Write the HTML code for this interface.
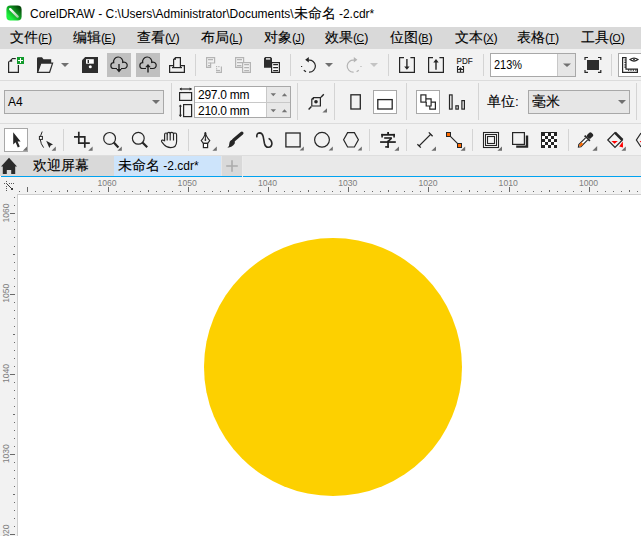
<!DOCTYPE html>
<html><head><meta charset="utf-8">
<style>
*{margin:0;padding:0;box-sizing:border-box}
html,body{width:641px;height:536px;overflow:hidden;background:#fff;font-family:"Liberation Sans",sans-serif;color:#000}
.a{position:absolute}
svg{position:absolute;overflow:visible}
#title{left:0;top:0;width:641px;height:27px;background:#fff}
#menu{left:0;top:27px;width:641px;height:22px;background:#d9d9d9}
#tb1{left:0;top:49px;width:641px;height:32px;background:#f2f2f2;border-bottom:1px solid #dcdcdc}
#tb2{left:0;top:81px;width:641px;height:43px;background:#f2f2f2;border-bottom:1px solid #dcdcdc}
#tb3{left:0;top:124px;width:641px;height:31px;background:#f2f2f2}
#tabs{left:0;top:155px;width:641px;height:21px;background:#e9e9e9}
#blue{left:1px;top:176px;width:640px;height:1px;background:#00a2f0}
#hr{left:0;top:177px;width:641px;height:18px;background:#f2f2f2}
#hline{left:17px;top:194px;width:624px;height:1px;background:#cfcfcf}
#vr{left:0;top:195px;width:17px;height:341px;background:#f2f2f2}
#vline{left:17px;top:194px;width:1px;height:342px;background:#cfcfcf}
#canvas{left:18px;top:195px;width:623px;height:341px;background:#fff}
.mi{position:absolute;top:29px;font-size:13.5px;line-height:18px;white-space:nowrap}
.mi .p{font-size:12.5px;letter-spacing:-0.6px}
.mi .p u{font-size:10.5px;letter-spacing:0}
.cj{font-size:13.5px}
.k{-webkit-text-stroke:0.12px #000}
.sep{position:absolute;width:1px;background:#d0d0d0}
</style></head><body>
<div id="title" class="a"></div>
<div id="menu" class="a"></div>
<div id="tb1" class="a"></div>
<div id="tb2" class="a"></div>
<div id="tb3" class="a"></div>
<div id="tabs" class="a"></div>
<div id="hr" class="a"></div>
<div id="blue" class="a"></div>
<div id="vr" class="a"></div>
<div id="hline" class="a"></div>
<div id="vline" class="a"></div>
<div id="canvas" class="a"></div>

<!-- title -->
<svg style="left:6px;top:5px" width="16" height="16" viewBox="0 0 16 16">
<defs><linearGradient id="lg" x1="0" y1="1" x2="1" y2="0"><stop offset="0.22" stop-color="#1ef23e"/><stop offset="0.5" stop-color="#0fa824"/><stop offset="0.85" stop-color="#064a0b"/></linearGradient>
<linearGradient id="lw" x1="0" y1="0" x2="1" y2="1"><stop offset="0" stop-color="#ffffff"/><stop offset="1" stop-color="#a8cfa8"/></linearGradient></defs>
<rect x="0.4" y="0.4" width="15.2" height="15.2" rx="4" fill="url(#lg)"/>
<path d="M4.2 4.2 L11.6 11.6" stroke="url(#lw)" stroke-width="2.4" stroke-linecap="round"/>
</svg>
<div class="a" style="left:30px;top:5px;font-size:12px;line-height:18px;white-space:nowrap">CorelDRAW - C:\Users\Administrator\Documents\<span class="cj k">未命名</span> -2.cdr*</div>

<!-- menu -->
<div class="mi" style="left:10px"><span class="k">文件</span><span class="p">(<u>F</u>)</span></div>
<div class="mi" style="left:73px"><span class="k">编辑</span><span class="p">(<u>E</u>)</span></div>
<div class="mi" style="left:137px"><span class="k">查看</span><span class="p">(<u>V</u>)</span></div>
<div class="mi" style="left:201px"><span class="k">布局</span><span class="p">(<u>L</u>)</span></div>
<div class="mi" style="left:264px"><span class="k">对象</span><span class="p">(<u>J</u>)</span></div>
<div class="mi" style="left:325px"><span class="k">效果</span><span class="p">(<u>C</u>)</span></div>
<div class="mi" style="left:390px"><span class="k">位图</span><span class="p">(<u>B</u>)</span></div>
<div class="mi" style="left:455px"><span class="k">文本</span><span class="p">(<u>X</u>)</span></div>
<div class="mi" style="left:517px"><span class="k">表格</span><span class="p">(<u>T</u>)</span></div>
<div class="mi" style="left:581px"><span class="k">工具</span><span class="p">(<u>O</u>)</span></div>


<!-- toolbar1 icons -->
<svg style="left:0;top:0" width="641" height="160">
<g fill="none" stroke="#262626" stroke-width="1.2">
 <!-- new doc -->
 <path d="M8.6 61.5 V72.4 H18.4 V65"/>
 <path d="M12 58.6 H15.8"/>
</g>
<path d="M8.4 61.8 L12.2 58 L12.2 61.8 Z" fill="#262626"/>
<rect x="17" y="57" width="7" height="7" fill="#129a2c"/>
<rect x="20" y="58" width="1" height="5" fill="#fff"/><rect x="18" y="60" width="5" height="1" fill="#fff"/>
<!-- folder -->
<path d="M37 72.7 V58.5 Q37 57.2 38.3 57.2 H42 L43.5 59.2 H51.2 V63 H40.8 L37.6 72.7 Z" fill="#2d2d2d"/>
<path d="M40.8 63.2 H52.6 L49.6 72.3 H37.6 Z" fill="none" stroke="#2d2d2d" stroke-width="1.2"/>
<path d="M61 63 H69 L65 67 Z" fill="#707070"/>
<!-- save -->
<path d="M82 60.2 L85.2 57 H98 V73 H82 Z" fill="#2d2d2d"/>
<rect x="86" y="59.2" width="7.8" height="4.5" fill="#fff"/>
<rect x="87.6" y="60" width="1.4" height="3" fill="#2d2d2d"/>
<circle cx="90.3" cy="66.8" r="1.5" fill="#fff"/>
<!-- cloud buttons -->
<rect x="107" y="53" width="24" height="24" fill="#c0c0c0"/>
<rect x="136" y="53" width="24" height="24" fill="#c0c0c0"/>
<g fill="none" stroke="#1e1e1e" stroke-width="1.2">
 <path d="M117 68.5 H113.80 A2.9 2.9 0 0 1 113.73 62.7 A4.6 4.6 0 1 1 122.74 62.36 A3.2 3.2 0 1 1 124 68.5 H121"/>
 <path d="M146 68.5 H142.80 A2.9 2.9 0 0 1 142.73 62.7 A4.6 4.6 0 1 1 151.74 62.36 A3.2 3.2 0 1 1 153 68.5 H150"/>
</g>
<path d="M118.3 64 H119.7 V69 H121.8 L119 72.6 L116.2 69 H118.3 Z" fill="#1e1e1e"/>
<path d="M147.3 72.6 H148.7 V67.3 H150.8 L148 63.9 L145.2 67.3 H147.3 Z" fill="#1e1e1e"/>
<!-- print -->
<g fill="none" stroke="#262626" stroke-width="1.2">
 <path d="M173.6 67.3 V59.4 L175.6 57.6 H180.4 V67.3"/>
 <path d="M173.6 65.6 H169.6 V72.4 H184.4 V65.6 H180.4"/>
 <path d="M172 67.6 H182"/>
</g>
<path d="M173.4 59.8 L176 57.4 L176 59.8 Z" fill="#262626"/>
<rect x="195" y="54" width="1" height="22" fill="#d4d4d4"/>
<!-- cut disabled -->
<g fill="none" stroke="#b4b4b4" stroke-width="1.2">
 <path d="M206.6 67.4 V57.6 H214.6 V63 H210.6 V67.4 Z"/>
 <path d="M208 59.6 H213 M208 63 H210.6 M208 65.6 H210"/>
 <path d="M221.4 66.5 V72.3 H216" />
 <path d="M216 70.5 H220"/>
</g>
<g fill="#b4b4b4"><rect x="216" y="66" width="1.2" height="1.2"/><rect x="218.3" y="66" width="1.2" height="1.2"/><rect x="216" y="68.2" width="1.2" height="1.2"/></g>
<!-- copy disabled -->
<g fill="none" stroke="#b4b4b4" stroke-width="1.2">
 <path d="M242 67.4 H235.6 V57.6 H243.6 V62.6"/>
 <path d="M237 59.6 H242 M237 62.6 H242 M237 65.6 H241.4"/>
 <rect x="242.6" y="62.6" width="7.8" height="9.8"/>
 <path d="M244.2 64.6 H249 M244.2 67.6 H249 M244.2 70.6 H249"/>
</g>
<!-- paste -->
<path d="M264 67.8 V58.2 L265.2 57 H270.8 L272 58.2 V62 H271 V67.8 Z" fill="#2d2d2d"/>
<rect x="266" y="58.2" width="4.2" height="1.4" fill="#f2f2f2"/>
<g fill="none" stroke="#262626" stroke-width="1.2">
 <rect x="271.6" y="62.6" width="7.8" height="9.8" fill="#fff"/>
 <path d="M273.2 64.6 H278 M273.2 67.6 H278 M273.2 70.6 H278"/>
</g>
<rect x="290" y="54" width="1" height="22" fill="#d4d4d4"/>
<!-- undo -->
<path d="M308.4 60.2 A6 6 0 1 1 309 72.1" fill="none" stroke="#262626" stroke-width="1.2"/>
<path d="M303.8 70.2 L306 71.8 M301.5 66 L301.7 67" fill="none" stroke="#262626" stroke-width="1.2"/>
<path d="M305.2 59.8 L308.8 57 V62.6 Z" fill="#262626"/>
<path d="M325 63 H333 L329 67 Z" fill="#707070"/>
<!-- redo disabled -->
<path d="M354.2 60.2 A6 6 0 1 0 353.6 72.1" fill="none" stroke="#b4b4b4" stroke-width="1.2"/>
<path d="M358.8 70.2 L356.6 71.8 M361.1 66 L360.9 67" fill="none" stroke="#b4b4b4" stroke-width="1.2"/>
<path d="M357.4 59.8 L353.8 57 V62.6 Z" fill="#b4b4b4"/>
<path d="M370 63 H378 L374 67 Z" fill="#c4c4c4"/>
<rect x="388" y="54" width="1" height="22" fill="#d4d4d4"/>
<!-- import/export -->
<g fill="none" stroke="#262626" stroke-width="1.2">
 <path d="M404 57.6 H399.6 V72.4 H414.4 V57.6 H410.4"/>
 <path d="M433 57.6 H428.6 V72.4 H443.4 V57.6 H439.4"/>
</g>
<path d="M406.2 59 H407.6 V66.4 H409.6 L406.9 69.8 L404.2 66.4 H406.2 Z" fill="#262626"/>
<path d="M435.3 69.8 H436.7 V62.4 H438.7 L436 58.9 L433.3 62.4 H435.3 Z" fill="#262626"/>
<!-- pdf -->
<text x="456.6" y="63.8" font-family="Liberation Sans" font-size="8.4" fill="#1a1a1a" stroke="#1a1a1a" stroke-width="0.15" textLength="16" lengthAdjust="spacingAndGlyphs">PDF</text>
<g fill="none" stroke="#262626" stroke-width="1.1">
 <path d="M459 66.5 H457.5 V72.2 H463.5 V66.5 H462"/>
 <path d="M460.5 72.2 V69.5 M457.6 69.5 H463.4"/>
</g>
<path d="M458.8 69 L460.5 67.3 L462.2 69 Z" fill="#262626"/>
<rect x="483" y="54" width="1" height="22" fill="#d4d4d4"/>
<!-- zoom combo -->
<rect x="490.5" y="53.5" width="85" height="23" fill="#fff" stroke="#a8a8a8"/>
<rect x="557.5" y="54" width="17.5" height="22" fill="#e6e6e6"/>
<rect x="557" y="54" width="1" height="22" fill="#c8c8c8"/>
<path d="M563 63.5 H571 L567 67 Z" fill="#707070"/>
<text x="494" y="69" font-family="Liberation Sans" font-size="12" fill="#000" textLength="28" lengthAdjust="spacingAndGlyphs">213%</text>
<!-- fullscreen -->
<g fill="none" stroke="#262626" stroke-width="1.2">
 <path d="M585 60 V57.5 H588 M598 57.5 H600.8 V60 M600.8 70 V72.4 H598 M588 72.4 H585 V70"/>
</g>
<rect x="587" y="60" width="12" height="10" fill="#2d2d2d"/>
<rect x="611" y="54" width="1" height="22" fill="#d4d4d4"/>
<!-- ruler eye button -->
<rect x="618.5" y="53.5" width="30" height="23" fill="#fff" stroke="#a8a8a8"/>
<g fill="none" stroke="#262626" stroke-width="1.2">
 <path d="M622.6 57.6 H626 V69.2 H637.4 V72.4 H622.6 Z"/>
 <path d="M626 60 H624.4 M626 62.4 H624.4 M626 64.8 H624.4 M626 67.2 H624.4 M628.6 69.2 V70.8 M631 69.2 V70.8 M633.4 69.2 V70.8 M635.8 69.2 V70.8"/>
 <path d="M630 59.6 Q634 56.6 638 59.6 Q634 62.6 630 59.6 Z"/>
</g>
<circle cx="634" cy="59.6" r="0.9" fill="#262626"/>
</svg>


<!-- property bar -->
<svg style="left:0;top:0" width="641" height="200">
<!-- A4 combo -->
<rect x="4.5" y="90.5" width="159" height="23" fill="#e6e6e6" stroke="#a8a8a8"/>
<path d="M152 100 H160 L156 104 Z" fill="#707070"/>
<rect x="171" y="83" width="1" height="37" fill="#d4d4d4"/>
<!-- w/h icons -->
<g fill="none" stroke="#262626" stroke-width="1.2">
 <rect x="179.6" y="92.6" width="12" height="7.8"/>
 <path d="M180 89 H191.6"/>
 <rect x="183.6" y="104.6" width="8" height="12"/>
 <path d="M180.4 105 V116.6"/>
</g>
<path d="M179.4 89 L181.6 87.4 V90.6 Z M191.8 89 L189.6 87.4 V90.6 Z M180.4 104.4 L178.8 106.6 H182 Z M180.4 117 L178.8 114.8 H182 Z" fill="#262626"/>
<!-- w/h inputs -->
<rect x="194.5" y="86.5" width="96" height="31" fill="#fff" stroke="#a8a8a8"/>
<rect x="266" y="87" width="24" height="30" fill="#e8e8e8"/>
<rect x="266" y="87" width="1" height="30" fill="#c8c8c8"/>
<rect x="195" y="102" width="95" height="1" fill="#c8c8c8"/>
<g fill="#747474">
 <path d="M270.6 93.2 H276 L273.3 96.2 Z M281.8 96.2 H287.2 L284.5 93.2 Z"/>
 <path d="M270.6 109.2 H276 L273.3 112.2 Z M281.8 112.2 H287.2 L284.5 109.2 Z"/>
</g>
<rect x="297" y="83" width="1" height="37" fill="#d4d4d4"/>
<!-- shape icon -->
<g fill="none" stroke="#262626" stroke-width="1.2">
 <path d="M311.8 99.2 L313.6 97.6 H320.4 V106 H311.8 Z"/>
 <path d="M321 97.2 L323.8 94.2 M311.4 106.6 L308.6 109.6" stroke-width="1.4"/>
</g>
<path d="M311.6 99.6 L314 97.4 V99.6 Z" fill="#262626"/>
<circle cx="316" cy="101.8" r="1.8" fill="#262626"/>
<path d="M322.4 112.4 H327 V108.2 Z" fill="#707070"/>
<rect x="334" y="83" width="1" height="37" fill="#d4d4d4"/>
<!-- portrait / landscape -->
<rect x="350.9" y="94.8" width="9.4" height="14.2" fill="none" stroke="#262626" stroke-width="1.3"/>
<rect x="373.5" y="90.5" width="23" height="23" fill="#fff" stroke="#a8a8a8"/>
<rect x="377.8" y="99.6" width="14.4" height="9.4" fill="none" stroke="#262626" stroke-width="1.3"/>
<rect x="406" y="83" width="1" height="37" fill="#d4d4d4"/>
<!-- pages buttons -->
<rect x="416.5" y="90.5" width="23" height="23" fill="#fff" stroke="#a8a8a8"/>
<g fill="none" stroke="#262626" stroke-width="1.2">
 <rect x="420.9" y="94.9" width="5" height="7.2"/>
 <path d="M425.9 98.8 H431.1 V106 H426.2 V102.1"/>
 <path d="M431.1 102.2 H435.4 V109.1 H429.8 V106"/>
 <rect x="449.5" y="94.9" width="2.6" height="14.2"/>
 <rect x="455.9" y="105.8" width="2.4" height="3.3"/>
 <rect x="461.9" y="100.6" width="2.5" height="8.5"/>
</g>
<rect x="478" y="83" width="1" height="37" fill="#d4d4d4"/>
<!-- unit combo -->
<rect x="528.5" y="90.5" width="101" height="23" fill="#e6e6e6" stroke="#a8a8a8"/>
<path d="M618 100 H626 L622 104 Z" fill="#707070"/>
<rect x="636" y="83" width="1" height="37" fill="#d4d4d4"/>
</svg>
<div class="a" style="left:8px;top:94px;font-size:12px;line-height:16px">A4</div>
<div class="a" style="left:198px;top:87px;font-size:12px;line-height:16px;letter-spacing:-0.25px">297.0 mm</div>
<div class="a" style="left:198px;top:103px;font-size:12px;line-height:16px;letter-spacing:-0.25px">210.0 mm</div>
<div class="a" style="left:487px;top:93px;font-size:13.5px;line-height:18px"><span class="k">单位</span>:</div>
<div class="a" style="left:532px;top:93px;font-size:13.5px;line-height:18px"><span class="k">毫米</span></div>


<!-- toolbox row -->
<svg style="left:0;top:0" width="641" height="200">
<rect x="4.5" y="128.5" width="23" height="23" fill="#fff" stroke="#a8a8a8"/>
<g fill="#6e6e6e">
 <path d="M22.8 150.8 H27 V146.6 Z"/>
 <path d="M51.6 150.8 H55.8 V146.6 Z"/>
 <path d="M88.2 150.8 H92.6 V146.4 Z"/>
 <path d="M117.4 150.8 H121.8 V146.4 Z"/>
 <path d="M212.4 150.8 H216.8 V146.4 Z"/>
 <path d="M299.6 150.6 H303.8 V146.4 Z"/>
 <path d="M328.6 150.6 H332.8 V146.4 Z"/>
 <path d="M357.6 150.6 H361.8 V146.4 Z"/>
 <path d="M394.4 150.8 H399 V146.4 Z"/>
 <path d="M431.4 150.8 H436 V146.4 Z"/>
 <path d="M460.6 150.8 H465.2 V146.4 Z"/>
 <path d="M497.4 150.8 H502 V146.4 Z"/>
 <path d="M592.4 150.8 H597.2 V146 Z"/>
 <path d="M621.4 150.8 H625.8 V146.4 Z"/>
</g>
<!-- pick arrow -->
<path d="M13.2 132.2 V144.6 L15.6 142.2 L17.8 147.4 L19.8 146.6 L17.6 141.6 L20.6 141.4 Z" fill="#262626"/>
<!-- shape tool -->
<path d="M42.2 131.6 Q37.8 140 43.6 147.6" fill="none" stroke="#262626" stroke-width="1"/>
<rect x="39.4" y="136.4" width="3" height="3" fill="#fff" stroke="#262626" stroke-width="1"/>
<path d="M46.2 140.8 L53 144.4 L50.6 145.6 L49.4 148 Z" fill="#262626"/>
<rect x="63" y="129" width="1" height="22" fill="#d4d4d4"/>
<!-- crop -->
<g fill="none" stroke="#262626" stroke-width="1.7">
 <path d="M78.8 131.8 V143.2 H89.8"/>
 <path d="M74 136.8 H84.8 V147.8"/>
</g>
<!-- zoom -->
<g fill="none" stroke="#262626">
 <circle cx="109.6" cy="138.4" r="5.9" stroke-width="1.2"/>
 <path d="M113.8 142.6 L118.4 147.4" stroke-width="2.2"/>
 <circle cx="138.3" cy="138.3" r="5.9" stroke-width="1.2"/>
 <path d="M142.5 142.5 L147.2 147.2" stroke-width="2.2"/>
</g>
<!-- hand -->
<g fill="none" stroke="#262626" stroke-width="1.15">
<path d="M164.6 141.2 V134.6 Q164.6 133 166 133 Q167 133 167.2 133.6 Q167.6 132.3 168.7 132.3 Q169.9 132.3 170.2 133.2 Q170.6 132.3 171.8 132.3 Q173.2 132.3 173.5 133.6 Q173.9 133 175 133 Q176.6 133 176.6 134.8 V141.4 Q176.6 147.6 170.6 147.6 Q166.4 147.6 163.8 144.4 L161.8 141.8 Q161 140.6 162.2 140.1 Q163.3 139.8 164.6 141.2"/>
<path d="M167.2 133.6 V140.6 M170.2 133.2 V140.6 M173.5 133.6 V140.6"/>
</g>
<rect x="188" y="129" width="1" height="22" fill="#d4d4d4"/>
<!-- pen -->
<path d="M205.4 132.2 Q205.6 136 209.8 140.6 L207.8 143.2 H203.2 L201.2 140.6 Q205.2 136 205.4 132.2 Z" fill="none" stroke="#262626" stroke-width="1.1"/>
<path d="M205.4 133.8 V139.8" stroke="#262626" stroke-width="1"/>
<circle cx="205.4" cy="133.2" r="1" fill="#262626"/>
<circle cx="205.4" cy="140" r="0.9" fill="#262626"/>
<rect x="203.4" y="143.4" width="4.2" height="4.2" fill="#fff" stroke="#262626" stroke-width="1.2"/>
<!-- brush -->
<path d="M241.8 133.2 L233.8 140" stroke="#262626" stroke-width="3.4" stroke-linecap="round"/>
<path d="M232.8 139.4 Q235.6 140.6 234.6 143.8 Q232.4 147.4 227.4 147.8 Q229.6 146 229.4 143 Q229.8 140 232.8 139.4 Z" fill="#262626"/>
<!-- freehand -->
<path d="M256.9 137.4 Q256.2 133 259.6 132.9 Q262.4 133 263.2 136.6 L264.4 143.2 Q265.4 147.4 268.4 147.3 Q272 147 271.9 143.2 Q271.6 139.8 268.6 138.4" fill="none" stroke="#262626" stroke-width="1.6"/>
<!-- rect / ellipse / polygon -->
<g fill="none" stroke="#262626" stroke-width="1.2">
 <rect x="285.9" y="133" width="14.2" height="13.9" stroke-width="1.3"/>
 <circle cx="322" cy="139.8" r="7.4"/>
 <path d="M343.6 139.8 L347.6 132.6 H354.4 L358.4 139.8 L354.4 147 H347.6 Z"/>
</g>
<rect x="369" y="129" width="1" height="22" fill="#d4d4d4"/>
<g fill="#1e1e1e"><rect x="387.2" y="132" width="1.8" height="2"/><rect x="381.3" y="133.9" width="13.6" height="1.8"/><rect x="381.3" y="133.9" width="1.6" height="3.6"/><rect x="393.3" y="133.9" width="1.6" height="3.6"/><rect x="384.2" y="137.2" width="7.6" height="1.6"/><rect x="380.1" y="141.2" width="15.7" height="1.7"/><rect x="387.2" y="140.6" width="1.7" height="7.1"/><rect x="385.2" y="146.1" width="3.7" height="1.6"/></g><path d="M391.6 138.2 L388.2 141.4" stroke="#1e1e1e" stroke-width="1.6"/>
<rect x="406" y="129" width="1" height="22" fill="#d4d4d4"/>
<!-- dimension -->
<g fill="none" stroke="#262626" stroke-width="1.1">
 <path d="M419 146 L431 134"/>
 <path d="M417.4 144.2 L420.8 147.6 M428.8 132.4 L432.6 136.2" stroke-width="1.3"/>
</g>
<!-- connector -->
<path d="M448.4 134.4 L459.4 145.4" stroke="#262626" stroke-width="1.1"/>
<rect x="446.5" y="132.5" width="4" height="4" fill="#ff6a00" stroke="#262626" stroke-width="1"/>
<rect x="457.5" y="143.5" width="4" height="4" fill="#ff6a00" stroke="#262626" stroke-width="1"/>
<rect x="472" y="129" width="1" height="22" fill="#d4d4d4"/>
<!-- contour -->
<g stroke="#262626" stroke-width="1.1">
 <rect x="483.5" y="132.5" width="15" height="15" fill="#fff"/>
 <rect x="485.5" y="134.5" width="11" height="11" fill="#fff"/>
 <rect x="487.5" y="136.5" width="7" height="7" fill="#f3f3f3"/>
</g>
<!-- drop shadow -->
<rect x="512.6" y="132.6" width="11.8" height="11.8" fill="none" stroke="#262626" stroke-width="1.2"/>
<path d="M525.8 135.6 H528.2 V147.8 H516.2 V145.6 H525.8 Z" fill="#262626"/>
<!-- checker -->
<rect x="541" y="132" width="16" height="16" fill="#262626"/>
<g fill="#fff"><rect x="545" y="133" width="3" height="3"/><rect x="551" y="133" width="3" height="3"/><rect x="542" y="136" width="3" height="3"/><rect x="548" y="136" width="3" height="3"/><rect x="554" y="136" width="3" height="3"/><rect x="545" y="139" width="3" height="3"/><rect x="551" y="139" width="3" height="3"/><rect x="542" y="142" width="3" height="3"/><rect x="548" y="142" width="3" height="3"/><rect x="554" y="142" width="3" height="3"/><rect x="545" y="145" width="3" height="3"/><rect x="551" y="145" width="3" height="3"/></g>
<rect x="568" y="129" width="1" height="22" fill="#d4d4d4"/>
<!-- eyedropper -->
<g transform="rotate(45 585.5 140)">
<rect x="583" y="130.6" width="5" height="6" rx="1.6" fill="#262626"/>
<rect x="581.8" y="136.6" width="7.4" height="1.8" fill="#262626"/>
<path d="M584 138.4 V148 L585.5 150 L587 148 V138.4" fill="#fff" stroke="#262626" stroke-width="1.1"/>
<rect x="584.4" y="144.4" width="2.2" height="4" fill="#ff6a00"/>
</g>
<!-- fill -->
<path d="M607.8 140 L615 132.6 L622.4 140 L615 147.4 Z" fill="none" stroke="#262626" stroke-width="1.2"/>
<path d="M615 132.6 L622.4 140" stroke="#262626" stroke-width="2.6"/>
<path d="M611.4 141 H617.8 L614.6 143.8 Z" fill="#ff0000"/>
<path d="M619.2 146.6 L622.8 141.6 L623 147.4 Z" fill="#ff0000"/>
<!-- partial next icon -->
<path d="M641 133 L636.4 140 L641 147" fill="none" stroke="#262626" stroke-width="1.2"/>
<path d="M641 141 H639.6 L641 142.6 Z" fill="#ff0000"/>
</svg>


<!-- tabs -->
<div class="a" style="left:0;top:155px;width:641px;height:1px;background:#dedede"></div>
<div class="a" style="left:0;top:156px;width:114px;height:20px;background:#d9d9d9"></div>
<div class="a" style="left:114px;top:156px;width:107px;height:20px;background:#cde4fb"></div>
<div class="a" style="left:221px;top:156px;width:1px;height:20px;background:#e6e6e6"></div>
<div class="a" style="left:222px;top:156px;width:20px;height:20px;background:#d9d9d9"></div>
<div class="a" style="left:242px;top:156px;width:1px;height:21px;background:#ececec"></div>
<svg style="left:0;top:0" width="641" height="200">
<path d="M9 157.8 L17 166.4 H15.2 V174 H11.2 V170 H6.8 V174 H2.8 V166.4 H1 Z" fill="#2b2b2b"/>
<path d="M232 160.2 V171.8 M226.2 166 H237.8" stroke="#ababab" stroke-width="1.6"/>
</svg>
<div class="a" style="left:33px;top:157px;font-size:13.5px;line-height:18px;white-space:nowrap"><span class="k">欢迎屏幕</span></div>
<div class="a" style="left:118px;top:157px;font-size:12px;line-height:18px;white-space:nowrap"><span class="cj k">未命名</span> -2.cdr*</div>
<svg style="left:0;top:0" width="641" height="536">
<g fill="#5a5a5a"><rect x="4" y="183" width="1" height="1"/><rect x="9" y="183" width="1" height="1"/><rect x="11" y="183" width="1" height="1"/><rect x="13" y="183" width="1" height="1"/><rect x="6" y="181" width="1" height="1"/><rect x="6" y="186" width="1" height="1"/><rect x="6" y="188" width="1" height="1"/><rect x="6" y="190" width="1" height="1"/><rect x="6" y="183" width="1" height="1"/></g><path d="M6.8 183.8 L12 189" stroke="#3a3a3a" stroke-width="1"/><rect x="11" y="188" width="2" height="2" fill="#3a3a3a"/>
<g fill="#6a6a6a">
<rect x="19" y="191" width="1" height="1"/>
<rect x="27" y="187" width="1" height="5"/>
<rect x="35" y="191" width="1" height="1"/>
<rect x="43" y="191" width="1" height="1"/>
<rect x="51" y="191" width="1" height="1"/>
<rect x="59" y="191" width="1" height="1"/>
<rect x="67" y="190" width="1" height="2"/>
<rect x="75" y="191" width="1" height="1"/>
<rect x="83" y="191" width="1" height="1"/>
<rect x="91" y="191" width="1" height="1"/>
<rect x="99" y="191" width="1" height="1"/>
<rect x="108" y="187" width="1" height="5"/>
<rect x="116" y="191" width="1" height="1"/>
<rect x="124" y="191" width="1" height="1"/>
<rect x="132" y="191" width="1" height="1"/>
<rect x="140" y="191" width="1" height="1"/>
<rect x="148" y="190" width="1" height="2"/>
<rect x="156" y="191" width="1" height="1"/>
<rect x="164" y="191" width="1" height="1"/>
<rect x="172" y="191" width="1" height="1"/>
<rect x="180" y="191" width="1" height="1"/>
<rect x="188" y="187" width="1" height="5"/>
<rect x="196" y="191" width="1" height="1"/>
<rect x="204" y="191" width="1" height="1"/>
<rect x="212" y="191" width="1" height="1"/>
<rect x="220" y="191" width="1" height="1"/>
<rect x="228" y="190" width="1" height="2"/>
<rect x="236" y="191" width="1" height="1"/>
<rect x="244" y="191" width="1" height="1"/>
<rect x="252" y="191" width="1" height="1"/>
<rect x="260" y="191" width="1" height="1"/>
<rect x="268" y="187" width="1" height="5"/>
<rect x="276" y="191" width="1" height="1"/>
<rect x="284" y="191" width="1" height="1"/>
<rect x="292" y="191" width="1" height="1"/>
<rect x="300" y="191" width="1" height="1"/>
<rect x="308" y="190" width="1" height="2"/>
<rect x="316" y="191" width="1" height="1"/>
<rect x="324" y="191" width="1" height="1"/>
<rect x="332" y="191" width="1" height="1"/>
<rect x="340" y="191" width="1" height="1"/>
<rect x="348" y="187" width="1" height="5"/>
<rect x="356" y="191" width="1" height="1"/>
<rect x="364" y="191" width="1" height="1"/>
<rect x="372" y="191" width="1" height="1"/>
<rect x="380" y="191" width="1" height="1"/>
<rect x="388" y="190" width="1" height="2"/>
<rect x="396" y="191" width="1" height="1"/>
<rect x="404" y="191" width="1" height="1"/>
<rect x="412" y="191" width="1" height="1"/>
<rect x="420" y="191" width="1" height="1"/>
<rect x="428" y="187" width="1" height="5"/>
<rect x="437" y="191" width="1" height="1"/>
<rect x="445" y="191" width="1" height="1"/>
<rect x="453" y="191" width="1" height="1"/>
<rect x="461" y="191" width="1" height="1"/>
<rect x="469" y="190" width="1" height="2"/>
<rect x="477" y="191" width="1" height="1"/>
<rect x="485" y="191" width="1" height="1"/>
<rect x="493" y="191" width="1" height="1"/>
<rect x="501" y="191" width="1" height="1"/>
<rect x="509" y="187" width="1" height="5"/>
<rect x="517" y="191" width="1" height="1"/>
<rect x="525" y="191" width="1" height="1"/>
<rect x="533" y="191" width="1" height="1"/>
<rect x="541" y="191" width="1" height="1"/>
<rect x="549" y="190" width="1" height="2"/>
<rect x="557" y="191" width="1" height="1"/>
<rect x="565" y="191" width="1" height="1"/>
<rect x="573" y="191" width="1" height="1"/>
<rect x="581" y="191" width="1" height="1"/>
<rect x="589" y="187" width="1" height="5"/>
<rect x="597" y="191" width="1" height="1"/>
<rect x="605" y="191" width="1" height="1"/>
<rect x="613" y="191" width="1" height="1"/>
<rect x="621" y="191" width="1" height="1"/>
<rect x="629" y="190" width="1" height="2"/>
<rect x="637" y="191" width="1" height="1"/>
<rect x="14" y="197" width="1" height="1"/>
<rect x="14" y="205" width="1" height="1"/>
<rect x="10" y="213" width="5" height="1"/>
<rect x="14" y="221" width="1" height="1"/>
<rect x="14" y="229" width="1" height="1"/>
<rect x="14" y="237" width="1" height="1"/>
<rect x="14" y="246" width="1" height="1"/>
<rect x="13" y="254" width="2" height="1"/>
<rect x="14" y="262" width="1" height="1"/>
<rect x="14" y="270" width="1" height="1"/>
<rect x="14" y="278" width="1" height="1"/>
<rect x="14" y="286" width="1" height="1"/>
<rect x="10" y="294" width="5" height="1"/>
<rect x="14" y="302" width="1" height="1"/>
<rect x="14" y="310" width="1" height="1"/>
<rect x="14" y="318" width="1" height="1"/>
<rect x="14" y="326" width="1" height="1"/>
<rect x="13" y="334" width="2" height="1"/>
<rect x="14" y="342" width="1" height="1"/>
<rect x="14" y="350" width="1" height="1"/>
<rect x="14" y="358" width="1" height="1"/>
<rect x="14" y="366" width="1" height="1"/>
<rect x="10" y="374" width="5" height="1"/>
<rect x="14" y="382" width="1" height="1"/>
<rect x="14" y="390" width="1" height="1"/>
<rect x="14" y="398" width="1" height="1"/>
<rect x="14" y="406" width="1" height="1"/>
<rect x="13" y="414" width="2" height="1"/>
<rect x="14" y="422" width="1" height="1"/>
<rect x="14" y="430" width="1" height="1"/>
<rect x="14" y="438" width="1" height="1"/>
<rect x="14" y="446" width="1" height="1"/>
<rect x="10" y="454" width="5" height="1"/>
<rect x="14" y="462" width="1" height="1"/>
<rect x="14" y="470" width="1" height="1"/>
<rect x="14" y="478" width="1" height="1"/>
<rect x="14" y="486" width="1" height="1"/>
<rect x="13" y="494" width="2" height="1"/>
<rect x="14" y="502" width="1" height="1"/>
<rect x="14" y="510" width="1" height="1"/>
<rect x="14" y="518" width="1" height="1"/>
<rect x="14" y="526" width="1" height="1"/>
<rect x="10" y="534" width="5" height="1"/>
</g>
<g font-family="Liberation Sans" font-size="9.8" fill="#7e7e7e" text-anchor="middle"><text x="107.0" y="186" textLength="19.2" lengthAdjust="spacingAndGlyphs">1060</text><text x="187.2" y="186" textLength="19.2" lengthAdjust="spacingAndGlyphs">1050</text><text x="267.5" y="186" textLength="19.2" lengthAdjust="spacingAndGlyphs">1040</text><text x="347.8" y="186" textLength="19.2" lengthAdjust="spacingAndGlyphs">1030</text><text x="428.0" y="186" textLength="19.2" lengthAdjust="spacingAndGlyphs">1020</text><text x="508.2" y="186" textLength="19.2" lengthAdjust="spacingAndGlyphs">1010</text><text x="588.5" y="186" textLength="19.2" lengthAdjust="spacingAndGlyphs">1000</text><text transform="translate(9 213.1) rotate(-90)" x="0" y="0" textLength="19" lengthAdjust="spacingAndGlyphs">1060</text><text transform="translate(9 293.3) rotate(-90)" x="0" y="0" textLength="19" lengthAdjust="spacingAndGlyphs">1050</text><text transform="translate(9 373.6) rotate(-90)" x="0" y="0" textLength="19" lengthAdjust="spacingAndGlyphs">1040</text><text transform="translate(9 453.8) rotate(-90)" x="0" y="0" textLength="19" lengthAdjust="spacingAndGlyphs">1030</text><text transform="translate(9 534.1) rotate(-90)" x="0" y="0" textLength="19" lengthAdjust="spacingAndGlyphs">1020</text></g></svg>
<!-- canvas circle -->
<svg style="left:0;top:0" width="641" height="536"><circle cx="333" cy="367" r="129" fill="#fdd000"/></svg>
</body></html>
